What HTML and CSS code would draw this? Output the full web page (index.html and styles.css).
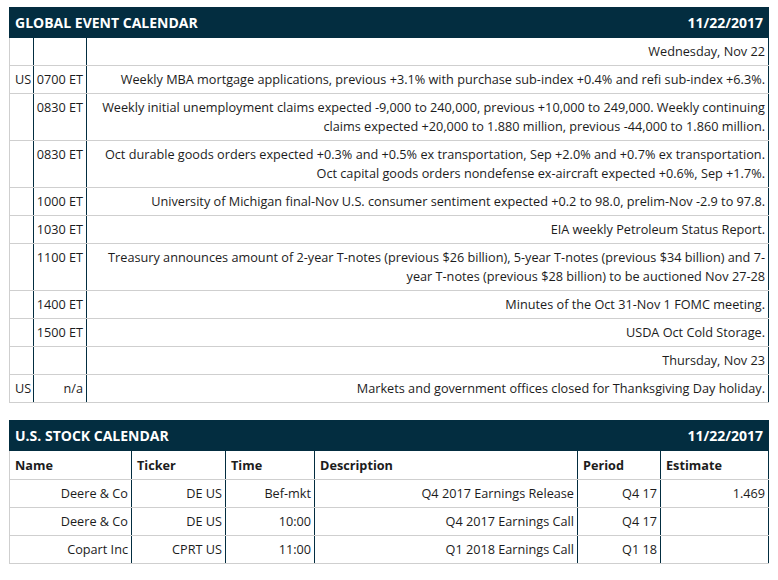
FILE: index.html
```html
<!DOCTYPE html>
<html>
<head>
<meta charset="utf-8">
<link rel="stylesheet" href="styles.css">
</head>
<body>
<section class="panel">
  <div class="panel-head"><span>Global Event Calendar</span><span>11/22/2017</span></div>
  <table class="grid events">
    <colgroup><col class="c-cty"><col class="c-time"><col></colgroup>
    <tr><td></td><td class="tm"></td><td>Wednesday, Nov 22</td></tr>
    <tr><td class="left">US</td><td class="tm">0700 ET</td><td>Weekly MBA mortgage applications, previous +3.1% with purchase sub-index +0.4% and refi sub-index +6.3%.</td></tr>
    <tr><td></td><td class="tm">0830 ET</td><td>Weekly initial unemployment claims expected -9,000 to 240,000, previous +10,000 to 249,000. Weekly continuing claims expected +20,000 to 1.880 million, previous -44,000 to 1.860 million.</td></tr>
    <tr><td></td><td class="tm">0830 ET</td><td>Oct durable goods orders expected +0.3% and +0.5% ex transportation, Sep +2.0% and +0.7% ex transportation. Oct capital goods orders nondefense ex-aircraft expected +0.6%, Sep +1.7%.</td></tr>
    <tr><td></td><td class="tm">1000 ET</td><td>University of Michigan final-Nov U.S. consumer sentiment expected +0.2 to 98.0, prelim-Nov -2.9 to 97.8.</td></tr>
    <tr><td></td><td class="tm">1030 ET</td><td>EIA weekly Petroleum Status Report.</td></tr>
    <tr><td></td><td class="tm">1100 ET</td><td>Treasury announces amount of 2-year T-notes (previous $26 billion), 5-year T-notes (previous $34 billion) and 7-year T-notes (previous $28 billion) to be auctioned Nov 27-28</td></tr>
    <tr><td></td><td class="tm">1400 ET</td><td>Minutes of the Oct 31-Nov 1 FOMC meeting.</td></tr>
    <tr><td></td><td class="tm">1500 ET</td><td>USDA Oct Cold Storage.</td></tr>
    <tr><td></td><td class="tm"></td><td>Thursday, Nov 23</td></tr>
    <tr><td class="left">US</td><td class="tm">n/a</td><td>Markets and government offices closed for Thanksgiving Day holiday.</td></tr>
  </table>
</section>

<section class="panel second">
  <div class="panel-head"><span>U.S. Stock Calendar</span><span>11/22/2017</span></div>
  <table class="grid stocks">
    <colgroup><col class="s-name"><col class="s-tick"><col class="s-time"><col><col class="s-per"><col class="s-est"></colgroup>
    <tr class="hdr"><th>Name</th><th>Ticker</th><th>Time</th><th>Description</th><th>Period</th><th>Estimate</th></tr>
    <tr><td>Deere &amp; Co</td><td>DE US</td><td>Bef-mkt</td><td>Q4 2017 Earnings Release</td><td>Q4 17</td><td>1.469</td></tr>
    <tr><td>Deere &amp; Co</td><td>DE US</td><td>10:00</td><td>Q4 2017 Earnings Call</td><td>Q4 17</td><td></td></tr>
    <tr><td>Copart Inc</td><td>CPRT US</td><td>11:00</td><td>Q1 2018 Earnings Call</td><td>Q1 18</td><td></td></tr>
  </table>
</section>
</body>
</html>
```

FILE: styles.css
```css
html, body {
  margin: 0;
  background: #ffffff;
}
body {
  padding: 7px 9px;
  font-family: "Open Sans", "Liberation Sans", sans-serif;
  font-size: 12.7px;
  color: #1c1c1c;
}
.panel {
  width: 760px;
}
.panel.second {
  margin-top: 17px;
}
.panel-head {
  display: flex;
  justify-content: space-between;
  align-items: center;
  height: 31px;
  padding: 0 6px 0 6px;
  box-sizing: border-box;
  background: #032d40;
  color: #ffffff;
  font-weight: 700;
  font-size: 14px;
  text-transform: uppercase;
}
.grid {
  width: 100%;
  border-collapse: collapse;
  table-layout: fixed;
  border-left: 1px solid #cfcfcf;
}
.grid td, .grid th {
  border-right: 1px solid #032d40;
  border-bottom: 1px solid #cfcfcf;
  padding: 4px 3px 4px 3px;
  line-height: 19px;
  text-align: right;
  vertical-align: top;
}
.grid td.left {
  text-align: left;
  padding-left: 5px;
}
.grid td.tm {
  white-space: nowrap;
  padding-left: 0;
}
.c-cty { width: 24px; }
.c-time { width: 53px; }
.s-name { width: 122px; }
.s-tick { width: 94px; }
.s-time { width: 89px; }
.s-per { width: 83px; }
.s-est { width: 108px; }
.stocks th {
  text-align: left;
  font-weight: 700;
  padding: 5px 5px 4px 5px;
}
```
